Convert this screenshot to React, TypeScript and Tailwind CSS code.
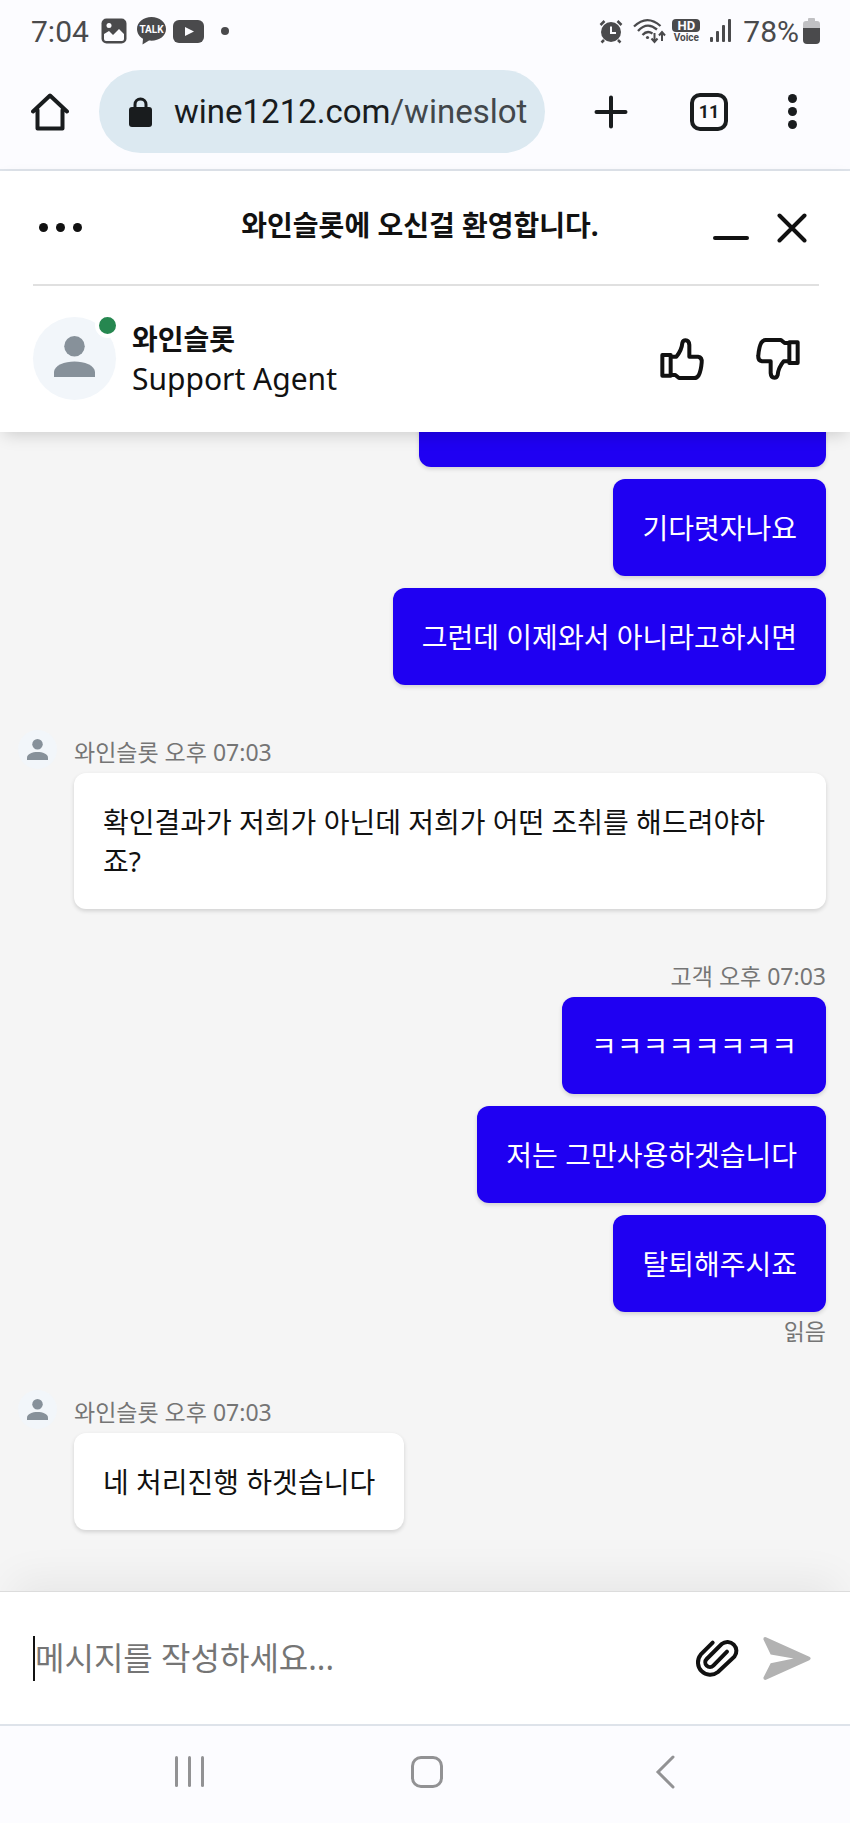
import type { ReactNode } from "react";

type Group = {
  id: number;
  from: "agent" | "customer";
  meta?: string;
  messages: string[];
  read?: boolean;
};

const groups: Group[] = [
  {
    id: 1,
    from: "customer",
    messages: ["", "기다렷자나요", "그런데 이제와서 아니라고하시면"],
  },
  {
    id: 2,
    from: "agent",
    meta: "와인슬롯 오후 07:03",
    messages: ["확인결과가 저희가 아닌데 저희가 어떤 조취를 해드려야하죠?"],
  },
  {
    id: 3,
    from: "customer",
    meta: "고객 오후 07:03",
    messages: ["ㅋㅋㅋㅋㅋㅋㅋㅋ", "저는 그만사용하겟습니다", "탈퇴해주시죠"],
    read: true,
  },
  {
    id: 4,
    from: "agent",
    meta: "와인슬롯 오후 07:03",
    messages: ["네 처리진행 하겟습니다"],
  },
];

const PersonIcon = ({ className }: { className: string }) => (
  <svg className={className} viewBox="0 0 42 42" fill="#87919a">
    <circle cx="21" cy="10.5" r="10.5" />
    <path d="M0 42v-5c0-7 11-11 21-11s21 4 21 11v5z" />
  </svg>
);

const ThumbIcon = ({ className }: { className?: string }) => (
  <svg
    className={className}
    width="46"
    height="44"
    viewBox="0 0 138 132"
    fill="none"
    stroke="#111"
    strokeWidth="12"
    strokeLinejoin="round"
  >
    <path d="M10 54H35V116H10zM38 59H52Q68 40 70 18Q72 10 80 10Q90 10 91 24V59H117Q130 61 128 77Q126 102 119 115Q114 123 106 123H60L49 114H38" />
  </svg>
);

const StatusBar = () => (
  <div className="flex h-[62px] items-center justify-between pr-[30px] pl-[31px] font-[Roboto] text-[30px] text-[#4a4a4c]">
    <div className="flex items-center">
      <span>7:04</span>
      <svg className="ml-3" width="26" height="26" viewBox="0 0 26 26">
        <rect width="25" height="25" x=".5" y=".5" rx="5" fill="#4a4a4c" />
        <path
          d="M3 16l5-3 4 4 6-6 5 5v5q0 2-2 2H5q-2 0-2-2z"
          fill="#fcfcff"
        />
        <circle cx="8" cy="7.500" r="2.500" fill="#fcfcff" />
      </svg>
      <svg className="ml-2.5" width="29" height="28" viewBox="0 0 29 28">
        <path
          d="M14.500 0C6.500 0 0 5.400 0 12c0 4.400 2.500 7.800 6 9.800L5.500 27.500l6.500-4c9 1 17-4 17-11.500C29 5.400 22.500 0 14.500 0z"
          fill="#4a4a4c"
        />
        <text
          x="14.500"
          y="16"
          textAnchor="middle"
          fontSize="10"
          fontWeight="700"
          fontFamily="Roboto"
          fill="#fcfcff"
        >
          TALK
        </text>
      </svg>
      <svg className="ml-[7px]" width="31" height="23" viewBox="0 0 31 23">
        <rect width="31" height="23" rx="6" fill="#4a4a4c" />
        <path d="M12 7l9 4.500-9 4.500z" fill="#fcfcff" />
      </svg>
      <span className="ml-[17px] size-2 rounded-full bg-[#4a4a4c]" />
    </div>
    <div className="flex items-center">
      <svg width="24" height="25" viewBox="0 0 24 25" stroke="#4a4a4c">
        <circle cx="12" cy="13" r="10" fill="#4a4a4c" stroke="none" />
        <path
          d="M1.500 6l4-4M22.500 6l-4-4M5 21l-2.500 2.500M19 21l2.500 2.500"
          strokeWidth="2.500"
          fill="none"
        />
        <path d="M12 7.500V14h5" stroke="#fcfcff" strokeWidth="2" fill="none" />
      </svg>
      <svg
        className="ml-2.5"
        width="33"
        height="26"
        viewBox="0 0 33 26"
        fill="none"
        stroke="#4a4a4c"
        strokeWidth="2.300"
      >
        <path d="M1 8.500Q14-4 27.500 8M5 13Q14 3 24 11.500M9.500 17Q14 12 19.500 15.500" />
        <circle cx="14.500" cy="19.500" r="1.600" fill="#4a4a4c" stroke="none" />
        <path
          d="M21.500 15v8.500M18.500 20.500l3 3.500 3-3.500M29 23v-8.500M26 17.500l3-3.500 3 3.500"
          strokeWidth="2"
        />
      </svg>
      <div className="ml-1.5 flex w-7 flex-col items-center font-bold">
        <span className="flex h-[13px] w-full items-center justify-center rounded-sm bg-[#4a4a4c] text-[13px] leading-none text-[#fcfcff]">
          HD
        </span>
        <span className="text-[10px] leading-[11px]">Voice</span>
      </div>
      <svg className="ml-[9px]" width="23" height="24" viewBox="0 0 23 24" fill="#4a4a4c">
        <rect x="1" y="18" width="3" height="5" rx="1" />
        <rect x="7" y="12" width="3" height="11" rx="1" />
        <rect x="13" y="6" width="3" height="17" rx="1" />
        <rect x="19" y="0" width="3" height="23" rx="1" />
      </svg>
      <span className="ml-[11px]">78%</span>
      <svg className="ml-1" width="17" height="26" viewBox="0 0 17 26">
        <path d="M5 1q0-1 1-1h5q1 0 1 1v2h2q3 0 3 3v5H0V6q0-3 3-3h2z" fill="#c0c0c3" />
        <path d="M0 10h17v12q0 4-4 4H4q-4 0-4-4z" fill="#4a4a4c" />
      </svg>
    </div>
  </div>
);

const BrowserBar = () => (
  <div className="flex items-center border-b-2 border-[#dee3ea] pt-2 pr-[49px] pb-4 pl-[31px]">
    <button type="button" aria-label="Home">
      <svg
        width="38"
        height="38"
        viewBox="0 0 38 38"
        fill="none"
        stroke="#191c1e"
        strokeWidth="4"
        strokeLinejoin="round"
        strokeLinecap="round"
      >
        <path d="M2 18.500L19 2.500l17 16M6.500 17v18.500h25V17" />
      </svg>
    </button>
    <button
      type="button"
      className="ml-[30px] flex h-[83px] min-w-0 flex-1 items-center rounded-full bg-[#dce9f1] pl-[30px] font-[Roboto] text-[33px] text-[#191c1e]"
    >
      <svg className="mr-[22px] shrink-0" width="23" height="30" viewBox="0 0 23 30">
        <rect y="10" width="23" height="20" rx="3" fill="#191c1e" />
        <path d="M6 12V7.500a5.500 5.500 0 0 1 11 0V12" fill="none" stroke="#191c1e" strokeWidth="3" />
      </svg>
      <span>
        wine1212.com<span className="text-[#42474b]">/wineslot</span>
      </span>
    </button>
    <button type="button" aria-label="New tab" className="ml-[49px]">
      <svg width="34" height="34" viewBox="0 0 34 34" stroke="#191c1e" strokeWidth="4" strokeLinecap="round">
        <path d="M17 2.500v29M2.500 17h29" />
      </svg>
    </button>
    <button
      type="button"
      aria-label="Tabs"
      className="ml-[62px] flex size-[38px] items-center justify-center rounded-[10px] border-4 border-[#191c1e] font-[Roboto] text-lg font-bold text-[#191c1e]"
    >
      11
    </button>
    <button type="button" aria-label="Menu" className="ml-[55px] flex w-[18px] flex-col items-center gap-1">
      <span className="size-[9px] rounded-full bg-[#191c1e]" />
      <span className="size-[9px] rounded-full bg-[#191c1e]" />
      <span className="size-[9px] rounded-full bg-[#191c1e]" />
    </button>
  </div>
);

const ChatHeader = () => (
  <header className="relative z-10 bg-white pr-[31px] pl-[33px] shadow-[0_6px_16px_-4px_rgba(0,0,0,0.18)]">
    <div className="grid h-[115px] grid-cols-[1fr_auto_1fr] items-center border-b-2 border-[#e0e0e0] pr-3">
      <button type="button" aria-label="Options" className="flex gap-2 justify-self-start pl-1.5">
        <span className="size-[9px] rounded-full bg-[#111]" />
        <span className="size-[9px] rounded-full bg-[#111]" />
        <span className="size-[9px] rounded-full bg-[#111]" />
      </button>
      <h1 className="pb-1 text-[28px] leading-[39px] font-bold">
        와인슬롯에 오신걸 환영합니다.
      </h1>
      <div className="flex items-center gap-7 justify-self-end">
        <button type="button" aria-label="Minimize" className="flex h-[29px] w-9 items-end pb-0.5">
          <span className="h-1 w-full rounded-full bg-[#111]" />
        </button>
        <button type="button" aria-label="Close">
          <svg width="30" height="30" viewBox="0 0 30 30" stroke="#111" strokeWidth="4" strokeLinecap="round">
            <path d="M2.500 2.500l25 25M27.500 2.500l-25 25" />
          </svg>
        </button>
      </div>
    </div>
    <div className="flex items-center pt-[31px] pr-[18px] pb-8">
      <div className="relative flex size-[83px] items-center justify-center rounded-full bg-[#f2f6fa]">
        <PersonIcon className="mb-1 size-[41px]" />
        <span className="absolute -top-1 -right-1 size-[25px] rounded-full border-4 border-white bg-[#268750]" />
      </div>
      <div className="ml-4 flex-1 leading-[39px]">
        <p className="text-[28px] font-bold">와인슬롯</p>
        <p className="text-[30px]">Support Agent</p>
      </div>
      <div className="flex gap-[50px]">
        <button type="button" aria-label="Good">
          <ThumbIcon />
        </button>
        <button type="button" aria-label="Bad">
          <ThumbIcon className="rotate-180" />
        </button>
      </div>
    </div>
  </header>
);

const Bubble = ({ from, children }: { from: Group["from"]; children: ReactNode }) => (
  <p
    className={
      from === "customer"
        ? "min-h-[97px] rounded-xl bg-[#1f00f2] px-[29px] pt-[30px] pb-7 text-[28px] leading-[39px] text-white shadow-[0_2px_4px_rgba(0,0,0,0.15)]"
        : "min-h-[97px] rounded-xl bg-white px-[29px] pt-[30px] pb-7 text-[28px] leading-[39px] shadow-[0_2px_4px_rgba(0,0,0,0.15)]"
    }
  >
    {children || <span className="block w-[349px]" />}
  </p>
);

const MessageGroup = ({ group }: { group: Group }) => {
  const isAgent = group.from === "agent";

  return (
    <section className="flex shrink-0 gap-[17px]">
      {isAgent && (
        <div className="-mt-1.5 ml-[18px] flex size-[39px] shrink-0 items-center justify-center rounded-full bg-[#f2f6fa]">
          <PersonIcon className="size-[21px]" />
        </div>
      )}
      <div
        className={
          isAgent
            ? "flex min-w-0 flex-1 flex-col items-start"
            : "flex min-w-0 flex-1 flex-col items-end"
        }
      >
        {group.meta && (
          <p className="mb-[5px] text-[23px] leading-8 text-[#757575]">{group.meta}</p>
        )}
        <div className={isAgent ? "flex flex-col items-start gap-3" : "flex flex-col items-end gap-3"}>
          {group.messages.map((text, i) => (
            <Bubble key={i} from={group.from}>
              {text}
            </Bubble>
          ))}
        </div>
        {group.read && (
          <p className="mt-[5px] text-[23px] leading-7 text-[#757575]">읽음</p>
        )}
      </div>
    </section>
  );
};

const Composer = () => (
  <form className="relative z-10 flex h-[133px] items-center border-t border-[#dcdcdc] bg-white pr-[38px] pl-[33px] shadow-[0_-24px_40px_-12px_rgba(0,0,0,0.06)]">
    <span className="h-[45px] w-0.5 bg-[#111]" />
    <input
      type="text"
      aria-label="메시지"
      placeholder="메시지를 작성하세요..."
      className="min-w-0 flex-1 bg-transparent text-[32px] outline-none placeholder:text-[#757575]"
    />
    <button type="button" aria-label="Attach">
      <svg
        width="50"
        height="45"
        viewBox="0 0 150 135"
        fill="none"
        stroke="#111"
        strokeWidth="12"
        strokeLinecap="round"
      >
        <path d="M62 20L26 56A37 37 0 0 0 78 108L127 62A27 27 0 0 0 89 24L44 69A14 14 0 0 0 64 89L105 47" />
      </svg>
    </button>
    <button type="submit" aria-label="Send" className="ml-5">
      <svg width="50" height="47" viewBox="0 0 150 140" fill="#b2b2b2">
        <path d="M4 12Q4 4 12 6L142 65Q150 70 142 75L12 134Q4 136 4 128L26 84L95 70L26 58z" />
      </svg>
    </button>
  </form>
);

const NavBar = () => (
  <nav className="grid h-[99px] grid-cols-3 items-center justify-items-center border-t-2 border-[#dee3ea] bg-[#fcfcff] pr-[66px] pb-1.5 pl-[70px]">
    <button type="button" aria-label="Recents" className="flex gap-2.5">
      <span className="h-[31px] w-[3px] rounded-full bg-[#929294]" />
      <span className="h-[31px] w-[3px] rounded-full bg-[#929294]" />
      <span className="h-[31px] w-[3px] rounded-full bg-[#929294]" />
    </button>
    <button
      type="button"
      aria-label="Home screen"
      className="size-8 rounded-[10px] border-[3px] border-[#929294]"
    />
    <button type="button" aria-label="Back">
      <svg width="20" height="34" viewBox="0 0 20 34" fill="none" stroke="#929294" strokeWidth="3" strokeLinecap="round">
        <path d="M18 2L3 17l15 15" />
      </svg>
    </button>
  </nav>
);

export default function App() {
  return (
    <div className="flex h-screen flex-col bg-[#f5f5f5] font-['Noto_Sans','Noto_Sans_CJK_KR',sans-serif] text-[#111]">
      <div className="bg-[#fcfcff]">
        <StatusBar />
        <BrowserBar />
      </div>
      <ChatHeader />
      <main className="flex min-h-0 flex-1 flex-col justify-end gap-[51px] overflow-hidden pr-6 pb-[61px]">
        {groups.map((group) => (
          <MessageGroup key={group.id} group={group} />
        ))}
      </main>
      <Composer />
      <NavBar />
    </div>
  );
}
